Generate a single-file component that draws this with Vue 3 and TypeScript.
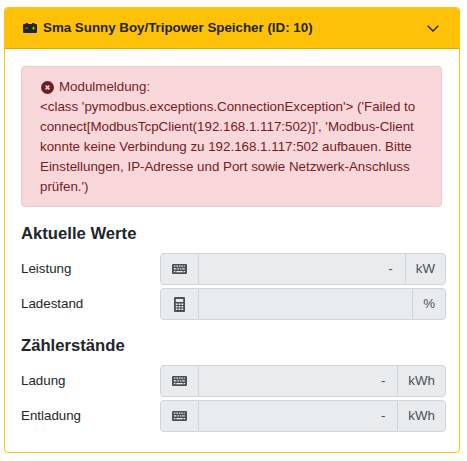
<script setup lang="ts">
interface ValueRow {
  label: string;
  icon: 'keyboard' | 'calculator';
  value: string;
  unit: string;
}

const currentValues: ValueRow[] = [
  { label: 'Leistung', icon: 'keyboard', value: '-', unit: 'kW' },
  { label: 'Ladestand', icon: 'calculator', value: '', unit: '%' },
];

const counters: ValueRow[] = [
  { label: 'Ladung', icon: 'keyboard', value: '-', unit: 'kWh' },
  { label: 'Entladung', icon: 'keyboard', value: '-', unit: 'kWh' },
];

const sections = [
  { title: 'Aktuelle Werte', rows: currentValues },
  { title: 'Zählerstände', rows: counters },
];
</script>

<template>
  <div class="page">
    <div class="card">
      <div class="card-header">
        <svg class="battery" viewBox="0 0 14 10" aria-hidden="true">
          <path d="M2.500 0h2.500v1h4V0h2.500v1H13a1 1 0 0 1 1 1v7a1 1 0 0 1-1 1H1a1 1 0 0 1-1-1V2a1 1 0 0 1 1-1h1.500z" fill="#212529" />
          <path d="M2.500 4.700h2.500v.8H2.500zM9 4.700h3v.8H9zM10.100 3.600h.8v3h-.8z" fill="#ffc107" />
        </svg>
        <span class="card-title">Sma Sunny Boy/Tripower Speicher (ID: 10)</span>
        <svg class="chevron" viewBox="0 0 12 7" aria-hidden="true">
          <path d="M.7.800 6 6l5.300-5.200" fill="none" stroke="#212529" stroke-width="1.400" />
        </svg>
      </div>
      <div class="card-body">
        <div class="alert">
          <div class="alert-heading">
            <svg class="alert-icon" viewBox="0 0 14 14" aria-hidden="true">
              <circle cx="7" cy="7" r="7" fill="#721c24" />
              <path d="M5 5l4 4M9 5l-4 4" stroke="#f8d7da" stroke-width="1.600" />
            </svg>
            <span>Modulmeldung:</span>
          </div>
          <div>&lt;class 'pymodbus.exceptions.ConnectionException'&gt; ('Failed to connect[ModbusTcpClient(192.168.1.117:502)]', 'Modbus-Client konnte keine Verbindung zu 192.168.1.117:502 aufbauen. Bitte Einstellungen, IP-Adresse und Port sowie Netzwerk-Anschluss prüfen.')</div>
        </div>

        <section v-for="section in sections" :key="section.title" class="section">
          <h3 class="section-title">{{ section.title }}</h3>
          <div v-for="row in section.rows" :key="row.label" class="row">
            <label class="row-label">{{ row.label }}</label>
            <div class="input-group">
              <span class="addon addon-icon">
                <svg v-if="row.icon === 'keyboard'" class="icon-keyboard" viewBox="0 0 15 10" aria-hidden="true">
                  <path fill-rule="evenodd" fill="#495057" d="M1 0h13a1 1 0 0 1 1 1v8a1 1 0 0 1-1 1H1a1 1 0 0 1-1-1V1a1 1 0 0 1 1-1zm.800 1.500v1.300h1.600V1.500zm2.500 0v1.300h1.600V1.500zm2.500 0v1.300h1.600V1.500zm2.500 0v1.300h1.600V1.500zm2.500 0v1.300h1V1.500zM1.800 4.200v1.300h2.500V4.200zm3.500 0v1.300h1.600V4.200zm2.500 0v1.300h1.600V4.200zm2.500 0v1.300h2.500V4.200zM1.800 6.900v1.300h1.600V6.900zm2.500 0v1.300h6.400V6.900zm7.300 0v1.300h1.600V6.900z" />
                </svg>
                <svg v-else class="icon-calc" viewBox="0 0 11 15" aria-hidden="true">
                  <path fill-rule="evenodd" fill="#495057" d="M1 0h9a1 1 0 0 1 1 1v13a1 1 0 0 1-1 1H1a1 1 0 0 1-1-1V1a1 1 0 0 1 1-1zm.800 2v3h7.400V2zm0 4.500V8h1.800V6.500zm2.800 0V8h1.800V6.500zm2.800 0V8h1.800V6.500zm-5.600 2.500v1.500h1.800V9zm2.800 0v1.500h1.800V9zm2.800 0v1.500h1.800V9zm-5.600 2.500V13h1.800v-1.500zm2.800 0V13h1.800v-1.500zm2.800 0V13h1.800v-1.500z" />
                </svg>
              </span>
              <span class="value">{{ row.value }}</span>
              <span class="addon addon-unit">{{ row.unit }}</span>
            </div>
          </div>
        </section>
      </div>
    </div>
  </div>
</template>

<style>
body {
  margin: 0;
  background: #fff;
}
</style>

<style scoped>
.page {
  padding: 7px 7px 8px 4px;
  font-family: "Liberation Sans", Arial, sans-serif;
  font-size: 13.330px;
  line-height: 20px;
  color: #212529;
}

.card {
  border: 1px solid #ffc107;
  border-radius: 4px;
  overflow: hidden;
  background: #fff;
}

.card-header {
  display: flex;
  align-items: center;
  height: 40px;
  padding: 0 20px 0 18px;
  background: #ffc107;
  border-bottom: 1px solid #e0a800;
  font-weight: 700;
}

.battery {
  width: 14px;
  height: 10px;
  margin-right: 6px;
}

.card-title {
  flex: 1;
}

.chevron {
  width: 12px;
  height: 7px;
}

.card-body {
  padding: 17px 17px 20px 16px;
}

.alert {
  padding: 10px 18px 9px;
  background: #f8d7da;
  border: 1px solid #f5c6cb;
  border-radius: 4px;
  color: #721c24;
}

.alert-heading {
  display: flex;
  align-items: center;
  gap: 5px;
  padding-left: 1px;
}

.alert-icon {
  width: 13px;
  height: 13px;
}

.section-title {
  margin: 0;
  font-size: 16.670px;
  font-weight: 700;
  line-height: 20px;
}

.section {
  margin-top: 17px;
}

.section + .section {
  margin-top: 16px;
}

.row {
  display: flex;
  align-items: center;
  margin-top: 3px;
  margin-right: -4px;
  height: 32px;
}

.section-title + .row {
  margin-top: 9px;
}

.row-label {
  width: 139px;
  flex: none;
}

.input-group {
  display: flex;
  flex: 1;
  height: 32px;
  color: #495057;
}

.addon {
  display: flex;
  align-items: center;
  justify-content: center;
  box-sizing: border-box;
  background: #e9ecef;
  border: 1px solid #ced4da;
  flex: none;
}

.addon-icon {
  width: 39px;
  border-radius: 4px 0 0 4px;
}

.addon-unit {
  padding: 0 10px;
  border-radius: 0 4px 4px 0;
}

.value {
  flex: 1;
  box-sizing: border-box;
  padding: 0 12px;
  text-align: right;
  line-height: 30px;
  background: #e9ecef;
  border-top: 1px solid #ced4da;
  border-bottom: 1px solid #ced4da;
}

.icon-keyboard {
  width: 15px;
  height: 10px;
}

.icon-calc {
  width: 11px;
  height: 15px;
}
</style>
